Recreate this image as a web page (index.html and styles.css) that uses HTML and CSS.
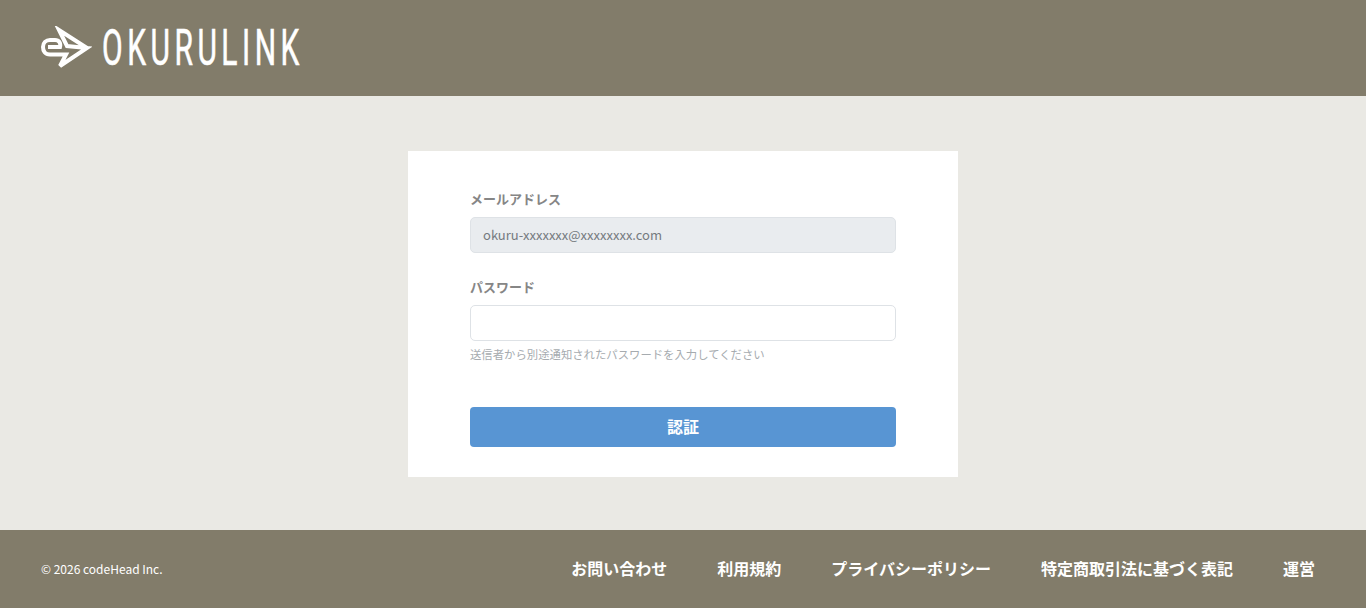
FILE: index.html
```html
<!DOCTYPE html>
<html lang="ja">
<head>
  <meta charset="UTF-8">
  <meta name="viewport" content="width=device-width, initial-scale=1.0">
  <title>OKURULINK</title>
  <link rel="stylesheet" href="styles.css">
</head>
<body>
  <header class="site-header">
    <a class="logo" href="#">
      <svg class="logo-icon" width="52" height="44" viewBox="0 0 52 44" fill="none" stroke="#fff" stroke-width="4" stroke-linejoin="miter" stroke-linecap="butt">
        <path d="M47 22 L19 4 L27 20 L47 22 L20 40 L26 28.5 L10 28.5 C5 28.5 3 25 3 21 C3 17 6 14 10 14 L15 14 C19 14 21 17 20 21 L8 21"/>
      </svg>
      <span class="logo-text">OKURULINK</span>
    </a>
  </header>

  <main class="main-content">
    <form class="auth-card">
      <div class="field">
        <label class="field-label">メールアドレス</label>
        <input class="field-input" type="text" value="okuru-xxxxxxx@xxxxxxxx.com" disabled>
      </div>
      <div class="field">
        <label class="field-label">パスワード</label>
        <input class="field-input" type="password">
        <p class="field-hint">送信者から別途通知されたパスワードを入力してください</p>
      </div>
      <button class="submit-btn" type="button">認証</button>
    </form>
  </main>

  <footer class="site-footer">
    <small class="copyright">© 2026 codeHead Inc.</small>
    <nav class="footer-nav">
      <a href="#">お問い合わせ</a>
      <a href="#">利用規約</a>
      <a href="#">プライバシーポリシー</a>
      <a href="#">特定商取引法に基づく表記</a>
      <a href="#">運営</a>
    </nav>
  </footer>
</body>
</html>
```

FILE: styles.css
```css
* {
  box-sizing: border-box;
}
body {
  margin: 0;
  font-family: "Noto Sans CJK JP", sans-serif;
  background: #eae9e4;
  color: #868686;
}
.site-header {
  height: 96px;
  background: #827c6a;
  display: flex;
  align-items: center;
  padding-left: 40px;
}
.logo {
  display: flex;
  align-items: center;
  color: #fff;
  text-decoration: none;
}
.logo-icon {
  display: block;
}
.logo-text {
  font-family: "Roboto", sans-serif;
  font-size: 50px;
  line-height: 48px;
  letter-spacing: 7.5px;
  margin-left: 10px;
  -webkit-text-stroke: 0.6px #fff;
  transform: scaleX(0.6);
  transform-origin: left center;
  white-space: nowrap;
}
.main-content {
  height: 434px;
  padding-top: 55px;
}
.auth-card {
  width: 550px;
  height: 326px;
  margin: 0 auto;
  padding: 38px 62px 30px;
  background: #fff;
}
.field {
  margin-bottom: 24px;
}
.field-label {
  display: block;
  font-size: 13px;
  font-weight: 700;
  line-height: 20px;
  margin-bottom: 8px;
}
.field-input {
  display: block;
  width: 100%;
  height: 36px;
  padding: 0 12px 2px;
  font-family: inherit;
  font-size: 13px;
  color: #757b80;
  background: #fff;
  border: 1px solid #dee2e6;
  border-radius: 5px;
}
.field-input:disabled {
  background: #e9ecef;
}
.field-hint {
  margin: 5px 0 0;
  font-size: 11.375px;
  line-height: 16px;
  color: #a6abaf;
}
.submit-btn {
  display: block;
  width: 100%;
  height: 40px;
  margin-top: 45px;
  padding: 0 0 2px;
  font-family: inherit;
  font-size: 16px;
  font-weight: 700;
  color: #fff;
  background: #5895d3;
  border: none;
  border-radius: 4px;
}
.site-footer {
  height: 78px;
  background: #827c6a;
  color: #fff;
  display: flex;
  align-items: center;
  justify-content: space-between;
  padding: 0 51px 2px 41px;
}
.copyright {
  font-size: 12px;
}
.footer-nav {
  display: flex;
  gap: 50px;
}
.footer-nav a {
  color: #fff;
  font-size: 16px;
  font-weight: 700;
  text-decoration: none;
}
```
